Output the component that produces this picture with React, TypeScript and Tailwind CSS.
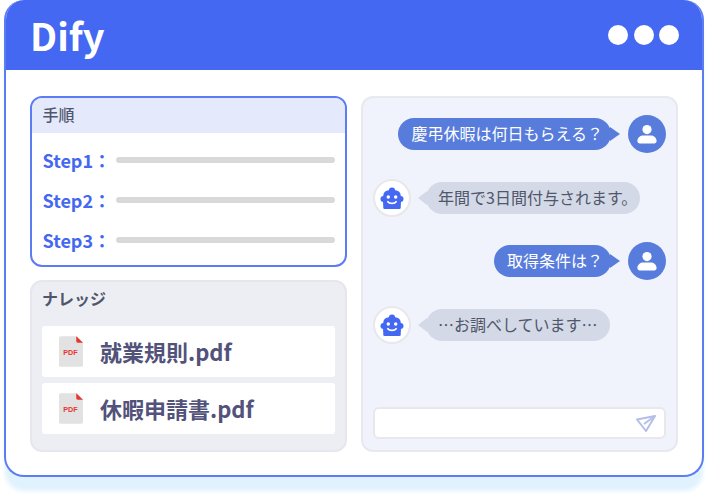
const font = { fontFamily: '"Noto Sans CJK JP", "Noto Sans", sans-serif' };

function UserAvatar() {
  return (
    <div className="flex h-[38px] w-[38px] shrink-0 items-center justify-center rounded-full bg-[#587cdc]">
      <svg width="22" height="22" viewBox="0 0 22 22" fill="#fff">
        <circle cx="11" cy="6.600" r="4.600" />
        <path d="M1.400 18c0-3.600 3-5.600 6-5.600h7.200c3 0 6 2 6 5.600 0 1.400-1 2.400-2.400 2.400H3.800c-1.400 0-2.400-1-2.400-2.400z" />
      </svg>
    </div>
  );
}

function BotAvatar() {
  return (
    <div className="flex h-[38px] w-[38px] shrink-0 items-center justify-center rounded-full border-2 border-[#e8e8ec] bg-white">
      <svg width="24" height="23" viewBox="0 0 26 25" className="mt-[1px]">
        <circle cx="13" cy="4" r="3.400" fill="#4468f2" />
        <rect x="3.500" y="3.500" width="19" height="20" rx="6" fill="#4468f2" />
        <rect x="3.500" y="14" width="19" height="10" rx="1.500" fill="#4468f2" />
        <circle cx="3.800" cy="13" r="3.300" fill="#4468f2" />
        <circle cx="22.200" cy="13" r="3.300" fill="#4468f2" />
        <circle cx="9" cy="11" r="1.900" fill="#fff" />
        <circle cx="17" cy="11" r="1.900" fill="#fff" />
        <path d="M8.500 16c1.500 2.500 7.500 2.500 9 0" stroke="#fff" strokeWidth="1.800" strokeLinecap="round" fill="none" />
      </svg>
    </div>
  );
}

function UserMessage({ text }: { text: string }) {
  return (
    <div className="flex items-center justify-end">
      <div className="relative mr-[17px] flex h-[32px] items-center rounded-full bg-[#587cdc] pb-[2px] pl-[13px] pr-[8px] text-[16px] text-white">
        {text}
        <span className="absolute right-[-9px] top-[9px] h-0 w-0 border-y-[7px] border-l-[10px] border-y-transparent border-l-[#587cdc]" />
      </div>
      <UserAvatar />
    </div>
  );
}

function BotMessage({ text, pad }: { text: string; pad: string }) {
  return (
    <div className="flex items-center">
      <BotAvatar />
      <div className={`relative ml-[15px] flex h-[32px] items-center rounded-full bg-[#d3d9e6] pb-[2px] pl-[12px] text-[16px] text-[#50566b] ${pad}`}>
        <span className="absolute left-[-8px] top-[9px] h-0 w-0 border-y-[7px] border-r-[9px] border-y-transparent border-r-[#d3d9e6]" />
        {text}
      </div>
    </div>
  );
}

function StepRow({ label }: { label: string }) {
  return (
    <div className="flex h-[20px] items-center">
      <span className="w-[73.500px] shrink-0 whitespace-nowrap text-[18px] font-bold leading-[20px] text-[#4468f2]">{label}</span>
      <div className="h-[6px] flex-1 rounded-full bg-[#d9d9d9]" />
    </div>
  );
}

function PdfIcon() {
  return (
    <svg width="24" height="31" viewBox="0 0 25 32" className="shrink-0">
      <path d="M2 0h16.500L25 6.500V30a2 2 0 0 1-2 2H2a2 2 0 0 1-2-2V2a2 2 0 0 1 2-2z" fill="#e2e2e2" />
      <path d="M18 0l7 7h-5a2 2 0 0 1-2-2z" fill="#e8362f" />
      <text x="12" y="19.500" textAnchor="middle" fontSize="7.500" fontWeight="700" fill="#e8362f" fontFamily='"Liberation Sans", sans-serif'>PDF</text>
    </svg>
  );
}

function FileRow({ name }: { name: string }) {
  return (
    <div className="flex h-[51px] items-center rounded-[3px] bg-white pl-[17px]">
      <PdfIcon />
      <span className="ml-[17px] pb-[1px] text-[22px] font-bold text-[#52527a]">{name}</span>
    </div>
  );
}

export default function App() {
  return (
    <div className="h-[500px] w-[708px] overflow-hidden bg-white px-[4px]" style={font}>
      <div className="h-[477px] w-[700px] overflow-hidden rounded-[20px] border-2 border-t-0 border-[#5c7cf4] bg-white shadow-[0_15px_4px_-1px_#e0f2fe]">
        <div className="flex h-[70px] items-center justify-between bg-[#4468f2] pl-[24px] pr-[23px]">
          <span className="text-[38px] font-bold leading-none text-white">Dify</span>
          <div className="flex gap-[5.500px]">
            <span className="h-[20px] w-[20px] rounded-full bg-white" />
            <span className="h-[20px] w-[20px] rounded-full bg-white" />
            <span className="h-[20px] w-[20px] rounded-full bg-white" />
          </div>
        </div>
        <div className="flex gap-[14px] pl-[24px] pt-[26px]">
          <div className="flex w-[317px] flex-col gap-[13px]">
            <div className="h-[171px] overflow-hidden rounded-[12px] border-2 border-[#5c7cf4] bg-white">
              <div className="flex h-[35px] items-center bg-[#e5e9fc] pb-[3px] pl-[10.500px] text-[16px] font-medium text-[#50566b]">手順</div>
              <div className="flex flex-col gap-[20px] pl-[10.500px] pr-[10px] pt-[17px]">
                <StepRow label="Step1：" />
                <StepRow label="Step2：" />
                <StepRow label="Step3：" />
              </div>
            </div>
            <div className="h-[172px] rounded-[12px] border-2 border-[#e6e7ec] bg-[#edeef3] px-[10px]">
              <div className="flex h-[34px] items-center pb-[2px] text-[16px] font-bold text-[#50566b]">ナレッジ</div>
              <div className="mt-[10px] flex flex-col gap-[6px]">
                <FileRow name="就業規則.pdf" />
                <FileRow name="休暇申請書.pdf" />
              </div>
            </div>
          </div>
          <div className="flex h-[356px] w-[317px] flex-col rounded-[12px] border-2 border-[#e8e9ee] bg-[#f0f3fb] px-[10px] pb-[11px] pt-[17px]">
            <div className="flex flex-1 flex-col gap-[25.500px]">
              <UserMessage text="慶弔休暇は何日もらえる？" />
              <BotMessage text="年間で3日間付与されます。" pad="pr-[3px]" />
              <UserMessage text="取得条件は？" />
              <BotMessage text="…お調べしています…" pad="pr-[12px]" />
            </div>
            <div className="flex h-[32px] items-center justify-end rounded-[6px] border-2 border-[#e8e8ec] bg-white pr-[8px]">
              <svg width="20" height="17" viewBox="0 0 20 17" fill="none" stroke="#b4bfe8" strokeWidth="2" strokeLinejoin="round">
                <path d="M1 4.500L19 1L10 16z" />
                <path d="M19 1L8 9" />
              </svg>
            </div>
          </div>
        </div>
      </div>
    </div>
  );
}
